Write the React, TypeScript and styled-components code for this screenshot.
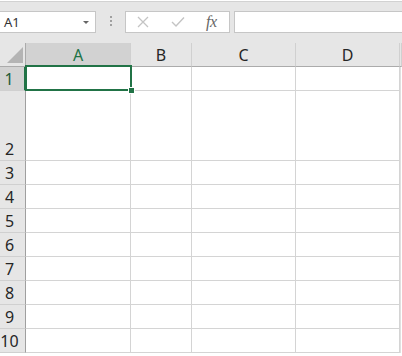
import React from "react";
import styled, { createGlobalStyle, css } from "styled-components";

const Global = createGlobalStyle`
  html, body { margin: 0; padding: 0; background: #ffffff; }
  body { font-family: "Noto Sans", "Open Sans", sans-serif; overflow: hidden; }
`;

const Page = styled.div`
  width: 402px;
  height: 356px;
  overflow: hidden;
  background: #ffffff;
  display: flex;
  flex-direction: column;
`;

const FormulaBar = styled.div`
  height: 42px;
  box-sizing: border-box;
  background: #e6e6e6;
  border-top: 1px solid #d2d2d2;
  margin-top: 1px;
  display: flex;
  align-items: flex-start;
  padding-top: 9px;
`;

const NameBox = styled.div`
  width: 96px;
  height: 22px;
  box-sizing: border-box;
  background: #ffffff;
  border: 1px solid #c6c6c6;
  border-left: none;
  display: flex;
  align-items: center;
  justify-content: space-between;
  padding: 0 6px 0 4px;
  font-size: 13px;
  color: #333333;
`;

const Caret = styled.span`
  width: 0;
  height: 0;
  border-left: 3.5px solid transparent;
  border-right: 3.5px solid transparent;
  border-top: 3px solid #666666;
`;

const Grip = styled.div`
  width: 29px;
  display: flex;
  flex-direction: column;
  align-items: center;
  gap: 2px;
  padding-top: 5px;
`;

const Dot = styled.span`
  width: 2px;
  height: 2px;
  background: #a0a0a0;
`;

const IconBox = styled.div`
  width: 105px;
  height: 22px;
  box-sizing: border-box;
  background: #ffffff;
  border: 1px solid #c6c6c6;
  display: flex;
  align-items: center;
  padding: 0 0 0 11px;
  gap: 22px;
`;

const Fx = styled.span`
  font-family: "Liberation Serif", "DejaVu Serif", serif;
  font-style: italic;
  font-size: 16px;
  color: #666666;
  letter-spacing: -0.5px;
  margin-left: -1px;
`;

const Input = styled.div`
  flex: 1;
  height: 22px;
  margin-left: 4px;
  box-sizing: border-box;
  background: #ffffff;
  border: 1px solid #c6c6c6;
  border-right: none;
`;

const Sheet = styled.div`
  display: grid;
  grid-template-columns: 26px 105px 61px 104px 104px 2px;
  grid-template-rows: 24px 24px 70px repeat(8, 24px);
  position: relative;
`;

const Corner = styled.div`
  background: #e6e6e6;
  border-bottom: 1px solid #ababab;
  border-right: 1px solid #ababab;
  box-sizing: border-box;
  display: flex;
  align-items: flex-end;
  justify-content: flex-end;
  padding: 0 2px 3px 0;
`;

const Triangle = styled.span`
  width: 0;
  height: 0;
  border-left: 16px solid transparent;
  border-bottom: 16px solid #b4b4b4;
`;

const ColHead = styled.div<{ $active?: boolean }>`
  box-sizing: border-box;
  background: #e6e6e6;
  border-bottom: 1px solid #ababab;
  border-right: 1px solid #d0d0d0;
  display: flex;
  align-items: center;
  justify-content: center;
  font-size: 16px;
  color: #262626;
  padding-top: 1px;
  ${(p) =>
    p.$active &&
    css`
      background: #d2d2d2;
      color: #217346;
      border-bottom: 2px solid #217346;
    `}
`;

const RowHead = styled.div<{ $active?: boolean }>`
  box-sizing: border-box;
  background: #e6e6e6;
  border-bottom: 1px solid #d0d0d0;
  border-right: 1px solid #9f9f9f;
  display: flex;
  align-items: flex-end;
  justify-content: center;
  padding: 0 6px 0 0;
  font-size: 16px;
  line-height: 22px;
  color: #262626;
  ${(p) =>
    p.$active &&
    css`
      background: #d2d2d2;
      color: #1e5c38;
      border-right: 2px solid #217346;
    `}
`;

const Cell = styled.div`
  box-sizing: border-box;
  background: #ffffff;
  border-bottom: 1px solid #d4d4d4;
  border-right: 1px solid #d4d4d4;
`;

const Edge = styled.div`
  background: #ffffff;
  border-left: 1px solid #e0e0e0;
`;

const Selection = styled.div`
  position: absolute;
  left: 25px;
  top: 22px;
  width: 107px;
  height: 26px;
  box-sizing: border-box;
  border: 2px solid #217346;
  pointer-events: none;
`;

const Handle = styled.span`
  position: absolute;
  right: -5px;
  bottom: -5px;
  width: 5px;
  height: 5px;
  background: #217346;
  border: 1px solid #ffffff;
`;

const cols = ["A", "B", "C", "D"];
const rows = [1, 2, 3, 4, 5, 6, 7, 8, 9, 10];

export default function App() {
  return (
    <>
      <Global />
      <Page>
        <FormulaBar>
          <NameBox>
            <span>A1</span>
            <Caret />
          </NameBox>
          <Grip>
            <Dot />
            <Dot />
            <Dot />
          </Grip>
          <IconBox>
            <svg width="12" height="12" viewBox="0 0 12 12">
              <path d="M1 1 L11 11 M11 1 L1 11" stroke="#c4c4c4" strokeWidth="1.3" fill="none" />
            </svg>
            <svg width="14" height="12" viewBox="0 0 14 12">
              <path d="M1 6 L5 10 L13 1.5" stroke="#c4c4c4" strokeWidth="1.4" fill="none" />
            </svg>
            <Fx>fx</Fx>
          </IconBox>
          <Input />
        </FormulaBar>
        <Sheet>
          <Corner>
            <Triangle />
          </Corner>
          {cols.map((c) => (
            <ColHead key={c} $active={c === "A"}>
              {c}
            </ColHead>
          ))}
          <ColHead />
          {rows.map((r) => (
            <React.Fragment key={r}>
              <RowHead $active={r === 1}>{r}</RowHead>
              {cols.map((c) => (
                <Cell key={c} />
              ))}
              <Edge />
            </React.Fragment>
          ))}
          <Selection>
            <Handle />
          </Selection>
        </Sheet>
      </Page>
    </>
  );
}
